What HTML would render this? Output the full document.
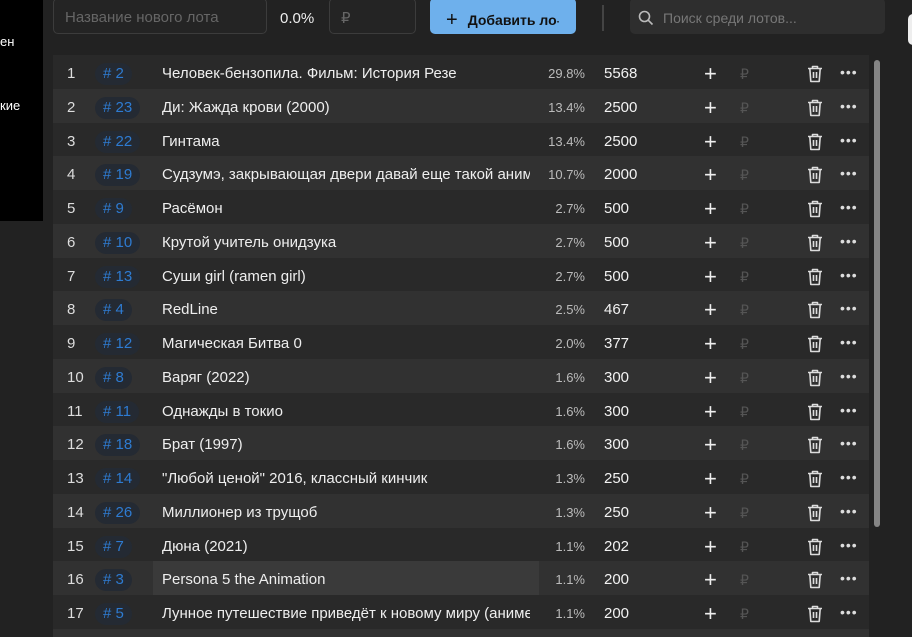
<!DOCTYPE html>
<html style="overflow:hidden;width:912px;height:637px"><head><meta charset="utf-8"><style>
*{margin:0;padding:0;box-sizing:border-box}
body{width:912px;height:637px;background:#222;position:relative;overflow:hidden;font-family:"Liberation Sans","DejaVu Sans",sans-serif;color:#e8e8e8}
.abs{position:absolute}
.inp{position:absolute;top:-2px;height:36px;border:1px solid #3c3c3c;border-radius:5px;background:#242424;color:#666;font-size:15px;padding:10px 11px}
.row{position:absolute;left:53px;width:816px;height:34px;font-size:15px}
.row span{position:absolute;top:2px;line-height:34px;white-space:nowrap}
.n{left:14px;color:#ddd}
.id{left:42px;top:8px!important;line-height:22px!important;height:22px;padding:0 8px;border-radius:11px;background:#242a33;color:#2e7bd1;font-size:15px}
.t{left:109px;width:368px;overflow:hidden;color:#eee}
.p{right:284px;font-size:13px;color:#bbb}
.a{left:551px;color:#f2f2f2}
.pl{left:651px;font-size:22px;color:#eee;font-weight:300;top:2px!important}
.rb{left:687px;color:#555;font-size:14px}
.tr{left:754px;top:7px!important}
.dt{left:787px;color:#ddd;font-size:14px;letter-spacing:1px;top:0px!important}
</style></head><body>
<div class="abs" style="left:0;top:0;width:43px;height:221px;background:#000"></div>
<div class="abs" style="left:0;top:34px;color:#fff;font-size:13px">ен</div>
<div class="abs" style="left:0;top:98px;color:#fff;font-size:13px">кие</div>
<div class="inp" style="left:53px;width:214px">Название нового лота</div>
<div class="abs" style="left:280px;top:10px;font-size:15px;color:#eee">0.0%</div>
<div class="inp" style="left:329px;width:87px">₽</div>
<div class="abs" style="left:430px;top:-2px;width:146px;height:36px;background:#6eb0ec;border-radius:5px;color:#111;font-size:14px;font-weight:bold;padding:10px 0 0 16px;white-space:nowrap;overflow:hidden"><span style="font-size:20px;font-weight:normal;position:relative;top:1px;margin-right:10px">+</span>Добавить ло<span style="font-size:10px">·</span></div>
<div class="abs" style="left:602px;top:5px;width:2px;height:26px;background:#444"></div>
<div class="abs" style="left:630px;top:-2px;width:255px;height:36px;background:#2e2e2e;border-radius:5px;color:#777;font-size:14px;padding:12px 0 0 33px">Поиск среди лотов...</div>
<svg class="abs" style="left:638px;top:10px" width="16" height="16" viewBox="0 0 16 16"><circle cx="6.5" cy="6.5" r="5" fill="none" stroke="#bbb" stroke-width="1.6"/><path d="M10.2 10.2L14.5 14.5" stroke="#bbb" stroke-width="1.6"/></svg>
<div class="abs" style="left:908px;top:14px;width:10px;height:31px;background:#eee;border-radius:6px"></div>
<div class="abs" style="left:874px;top:60px;width:6px;height:467px;background:#858585;border-radius:3px"></div>
<div id="rows"></div>
<script>
var d=[["2","Человек-бензопила. Фильм: История Резе","29.8%","5568"],["23","Ди: Жажда крови (2000)","13.4%","2500"],["22","Гинтама","13.4%","2500"],["19","Судзумэ, закрывающая двери давай еще такой аниме","10.7%","2000"],["9","Расёмон","2.7%","500"],["10","Крутой учитель онидзука","2.7%","500"],["13","Суши girl (ramen girl)","2.7%","500"],["4","RedLine","2.5%","467"],["12","Магическая Битва 0","2.0%","377"],["8","Варяг (2022)","1.6%","300"],["11","Однажды в токио","1.6%","300"],["18","Брат (1997)","1.6%","300"],["14","\"Любой ценой\" 2016, классный кинчик","1.3%","250"],["26","Миллионер из трущоб","1.3%","250"],["7","Дюна (2021)","1.1%","202"],["3","Persona 5 the Animation","1.1%","200"],["5","Лунное путешествие приведёт к новому миру (аниме)","1.1%","200"],["","","",""]];
var trash='<svg width="16" height="18" viewBox="0 0 16 18"><path d="M1 3.5H15M5.5 3.5V1.5H10.5V3.5M2.8 3.5L3.8 16.5H12.2L13.2 3.5" fill="none" stroke="#ddd" stroke-width="1.6" stroke-linejoin="round"/><path d="M6.5 7V13M9.5 7V13" stroke="#ddd" stroke-width="1.6"/></svg>';
var h='';
d.forEach(function(r,i){
var y=55+i*33.75;var bg=i%2?'#313131':'#292929';
if(i==17){h+='<div class="row" style="top:'+y+'px;height:10px;background:'+bg+'"></div>';return;}
var tbg=i==15?'<div style="position:absolute;left:100px;top:0;width:386px;height:34px;background:#3a3a3a"></div>':'';
h+='<div class="row" style="top:'+y+'px;background:'+bg+'">'+tbg+'<span class="n">'+(i+1)+'</span><span class="id"># '+r[0]+'</span><span class="t">'+r[1]+'</span><span class="p">'+r[2]+'</span><span class="a">'+r[3]+'</span><span class="pl">+</span><span class="rb">₽</span><span class="tr">'+trash+'</span><span class="dt">•••</span></div>';
});
document.getElementById('rows').innerHTML=h;
</script>
</body></html>
